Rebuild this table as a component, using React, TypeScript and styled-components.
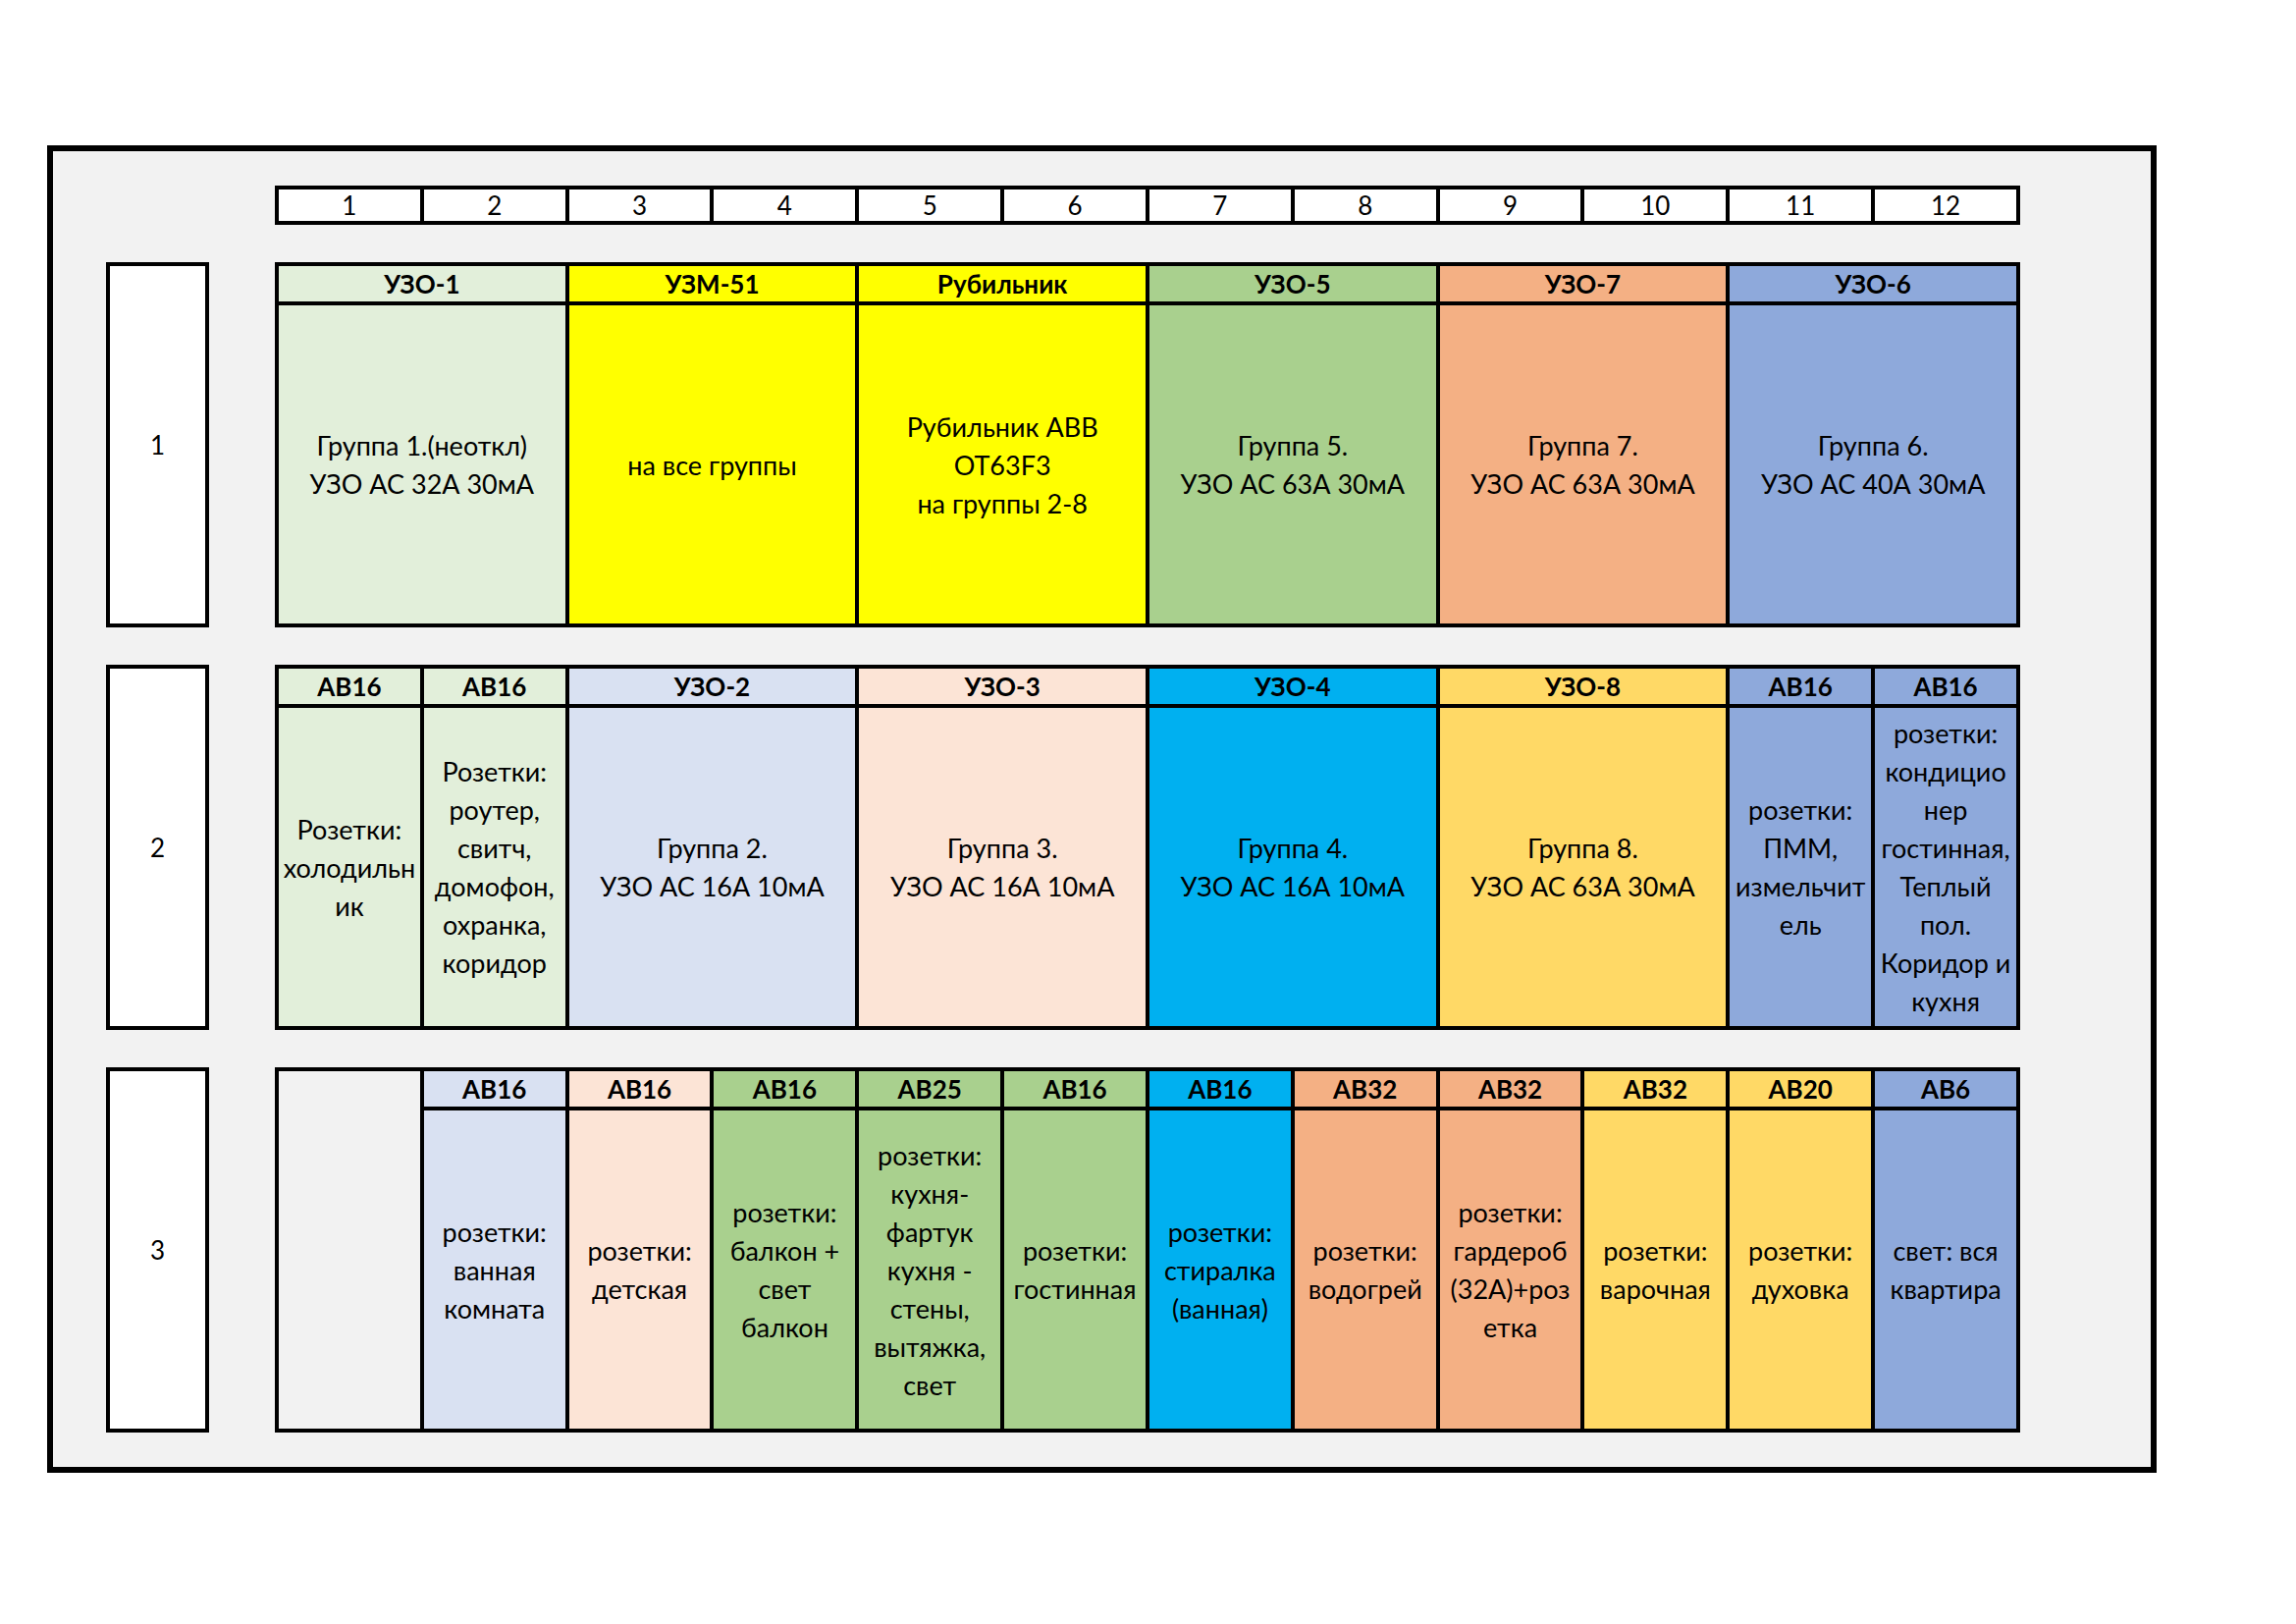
import React from 'react'
import styled, { createGlobalStyle } from 'styled-components'

type Cell = {
	title?: string
	lines?: string[]
	span?: number
	color: string
	blank?: boolean
}

const GREEN_LIGHT = '#E2EFDA'
const YELLOW = '#FFFF00'
const GREEN = '#A9D08E'
const ORANGE = '#F4B084'
const BLUE = '#8EA9DB'
const BLUE_LIGHT = '#D9E1F2'
const PEACH = '#FCE4D6'
const CYAN = '#00B0F0'
const GOLD = '#FFD966'
const GREY = '#F2F2F2'

const banks: Cell[][] = [
	[
		{ title: 'УЗО-1', span: 2, color: GREEN_LIGHT, lines: ['Группа 1.(неоткл)', 'УЗО АС 32А 30мА'] },
		{ title: 'УЗМ-51', span: 2, color: YELLOW, lines: ['на все группы'] },
		{ title: 'Рубильник', span: 2, color: YELLOW, lines: ['Рубильник ABB', 'OT63F3', 'на группы 2-8'] },
		{ title: 'УЗО-5', span: 2, color: GREEN, lines: ['Группа 5.', 'УЗО АС 63А 30мА'] },
		{ title: 'УЗО-7', span: 2, color: ORANGE, lines: ['Группа 7.', 'УЗО АС 63А 30мА'] },
		{ title: 'УЗО-6', span: 2, color: BLUE, lines: ['Группа 6.', 'УЗО АС 40А 30мА'] },
	],
	[
		{ title: 'АВ16', color: GREEN_LIGHT, lines: ['Розетки:', 'холодильн', 'ик'] },
		{ title: 'АВ16', color: GREEN_LIGHT, lines: ['Розетки:', 'роутер,', 'свитч,', 'домофон,', 'охранка,', 'коридор'] },
		{ title: 'УЗО-2', span: 2, color: BLUE_LIGHT, lines: ['Группа 2.', 'УЗО АС 16А 10мА'] },
		{ title: 'УЗО-3', span: 2, color: PEACH, lines: ['Группа 3.', 'УЗО АС 16А 10мА'] },
		{ title: 'УЗО-4', span: 2, color: CYAN, lines: ['Группа 4.', 'УЗО АС 16А 10мА'] },
		{ title: 'УЗО-8', span: 2, color: GOLD, lines: ['Группа 8.', 'УЗО АС 63А 30мА'] },
		{ title: 'АВ16', color: BLUE, lines: ['розетки:', 'ПММ,', 'измельчит', 'ель'] },
		{ title: 'АВ16', color: BLUE, lines: ['розетки:', 'кондицио', 'нер', 'гостинная,', 'Теплый', 'пол.', 'Коридор и', 'кухня'] },
	],
	[
		{ blank: true, color: GREY },
		{ title: 'АВ16', color: BLUE_LIGHT, lines: ['розетки:', 'ванная', 'комната'] },
		{ title: 'АВ16', color: PEACH, lines: ['розетки:', 'детская'] },
		{ title: 'АВ16', color: GREEN, lines: ['розетки:', 'балкон +', 'свет', 'балкон'] },
		{ title: 'АВ25', color: GREEN, lines: ['розетки:', 'кухня-', 'фартук', 'кухня -', 'стены,', 'вытяжка,', 'свет'] },
		{ title: 'АВ16', color: GREEN, lines: ['розетки:', 'гостинная'] },
		{ title: 'АВ16', color: CYAN, lines: ['розетки:', 'стиралка', '(ванная)'] },
		{ title: 'АВ32', color: ORANGE, lines: ['розетки:', 'водогрей'] },
		{ title: 'АВ32', color: ORANGE, lines: ['розетки:', 'гардероб', '(32А)+роз', 'етка'] },
		{ title: 'АВ32', color: GOLD, lines: ['розетки:', 'варочная'] },
		{ title: 'АВ20', color: GOLD, lines: ['розетки:', 'духовка'] },
		{ title: 'АВ6', color: BLUE, lines: ['свет: вся', 'квартира'] },
	],
]

const columns = Array.from({ length: 12 }, (_, i) => i + 1)

export default function App() {
	return (
		<>
			<GlobalStyle />
			<Sheet>
				<Frame>
					<Layout>
						<Spacer />
						<Grid>
							<colgroup>
								{columns.map((n) => <col key={n} />)}
							</colgroup>
							<tbody>
								<tr>
									{columns.map((n) => <NumberCell key={n}>{n}</NumberCell>)}
								</tr>
							</tbody>
						</Grid>

						{banks.map((bank, index) => (
							<React.Fragment key={index}>
								<RowLabel>{index + 1}</RowLabel>
								<Grid>
									<colgroup>
										{columns.map((n) => <col key={n} />)}
									</colgroup>
									<tbody>
										<tr>
											{bank.map((cell, i) =>
												cell.blank ? (
													<BlankCell key={i} rowSpan={2} $bg={cell.color} />
												) : (
													<HeadCell key={i} colSpan={cell.span ?? 1} $bg={cell.color}>
														{cell.title}
													</HeadCell>
												)
											)}
										</tr>
										<tr>
											{bank
												.filter((cell) => !cell.blank)
												.map((cell, i) => (
													<BodyCell key={i} colSpan={cell.span ?? 1} $bg={cell.color}>
														{cell.lines?.map((line, j) => <Line key={j}>{line}</Line>)}
													</BodyCell>
												))}
										</tr>
									</tbody>
								</Grid>
							</React.Fragment>
						))}
					</Layout>
				</Frame>
			</Sheet>
		</>
	)
}

const GlobalStyle = createGlobalStyle`
	html, body {
		margin: 0;
		padding: 0;
		background: #ffffff;
	}

	body {
		font-family: 'Lato', 'Roboto', 'Liberation Sans', sans-serif;
		color: #000000;
	}
`

const Sheet = styled.div`
	width: 2339px;
	height: 1654px;
	padding: 148px 0 0 48px;
	box-sizing: border-box;
`

const Frame = styled.div`
	width: 2149px;
	height: 1352px;
	box-sizing: border-box;
	border: 6px solid #000000;
	background-color: ${GREY};
	padding: 35px 0 0 54px;
`

const Layout = styled.div`
	display: grid;
	grid-template-columns: 105px 1778px;
	grid-template-rows: 40px repeat(3, 372px);
	column-gap: 67px;
	row-gap: 38px;
`

const Spacer = styled.div``

const Grid = styled.table`
	width: 1778px;
	height: 100%;
	table-layout: fixed;
	border-collapse: collapse;
	border: 4px solid #000000;

	col {
		width: calc(100% / 12);
	}
`

const NumberCell = styled.td`
	background-color: #ffffff;
	border: 4px solid #000000;
	padding: 0;
	text-align: center;
	vertical-align: middle;
	font-size: 26px;
	line-height: 1;
`

const RowLabel = styled.div`
	box-sizing: border-box;
	border: 4px solid #000000;
	background-color: #ffffff;
	display: flex;
	align-items: center;
	justify-content: center;
	font-size: 26px;
`

const HeadCell = styled.td<{ $bg: string }>`
	height: 36px;
	padding: 0;
	border: 4px solid #000000;
	background-color: ${({ $bg }) => $bg};
	text-align: center;
	vertical-align: middle;
	font-size: 26px;
	font-weight: 700;
	line-height: 1;
`

const BlankCell = styled.td<{ $bg: string }>`
	padding: 0;
	border: 4px solid #000000;
	background-color: ${({ $bg }) => $bg};
`

const BodyCell = styled.td<{ $bg: string }>`
	padding: 0;
	border: 4px solid #000000;
	background-color: ${({ $bg }) => $bg};
	text-align: center;
	vertical-align: middle;
	font-size: 27px;
`

const Line = styled.div`
	line-height: 39px;
	white-space: nowrap;
`
